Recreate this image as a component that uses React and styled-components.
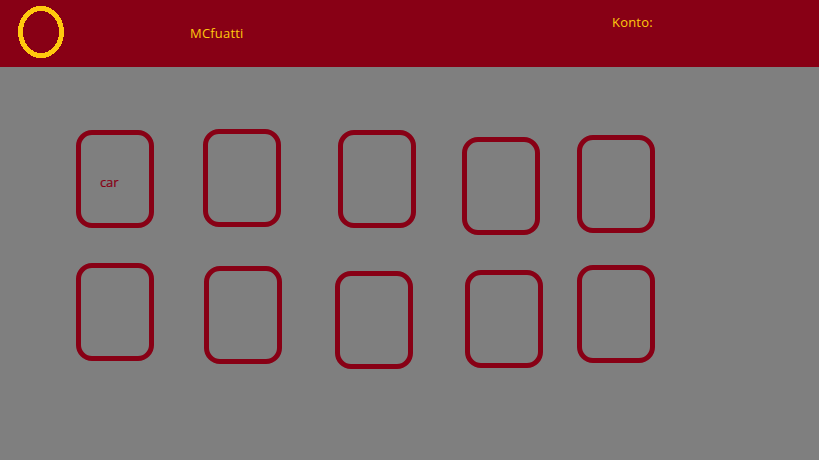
import React from "react";
import styled, { createGlobalStyle } from "styled-components";

const RED = "#880015";
const GOLD = "#ffc90e";

const GlobalStyle = createGlobalStyle`
  * { box-sizing: border-box; }
  body {
    margin: 0;
    background: #7f7f7f;
    font-family: "Open Sans", "Noto Sans", sans-serif;
    font-size: 13px;
    line-height: 18px;
  }
`;

const Page = styled.div`
  height: 460px;
  overflow: hidden;
  background: #7f7f7f;
`;

const Header = styled.header`
  display: flex;
  align-items: flex-start;
  height: 67px;
  padding: 6px 0 0 18px;
  background: ${RED};
  color: ${GOLD};
  letter-spacing: 0.2px;
`;

const Logo = styled.svg`
  display: block;
  flex: none;
  width: 46px;
  height: 52px;
`;

const Brand = styled.div`
  width: 54px;
  margin: 18px 0 0 126px;
  white-space: nowrap;
`;

const Account = styled.div`
  margin: 7px 0 0 368px;
  white-space: nowrap;
`;

const Board = styled.main`
  display: grid;
  grid-template-rows: 134px 134px;
  padding-top: 62px;
`;

const Row = styled.div`
  display: flex;
  align-items: flex-start;
`;

const Card = styled.div`
  flex: none;
  width: 78px;
  height: 98px;
  margin-left: ${(p) => p.$gap}px;
  margin-top: ${(p) => p.$drop}px;
  padding: 38px 0 0 19px;
  border: 5px solid ${RED};
  border-radius: 16px;
  color: ${RED};
  letter-spacing: -0.15px;
  -webkit-text-stroke: 0.2px ${RED};
`;

const rows = [
  [
    { gap: 76, drop: 1, label: "car" },
    { gap: 49, drop: 0 },
    { gap: 57, drop: 1 },
    { gap: 46, drop: 8 },
    { gap: 37, drop: 6 },
  ],
  [
    { gap: 76, drop: 0 },
    { gap: 50, drop: 3 },
    { gap: 53, drop: 8 },
    { gap: 52, drop: 7 },
    { gap: 34, drop: 2 },
  ],
];

export default function App() {
  return (
    <Page>
      <GlobalStyle />
      <Header>
        <Logo viewBox="0 0 46 52" shapeRendering="crispEdges">
          <ellipse cx="23" cy="26" rx="20.5" ry="23.5" fill="none" stroke={GOLD} strokeWidth="5" />
        </Logo>
        <Brand>MCfuatti</Brand>
        <Account>Konto:</Account>
      </Header>
      <Board>
        {rows.map((cards, r) => (
          <Row key={r}>
            {cards.map((c, i) => (
              <Card key={i} $gap={c.gap} $drop={c.drop}>
                {c.label}
              </Card>
            ))}
          </Row>
        ))}
      </Board>
    </Page>
  );
}
